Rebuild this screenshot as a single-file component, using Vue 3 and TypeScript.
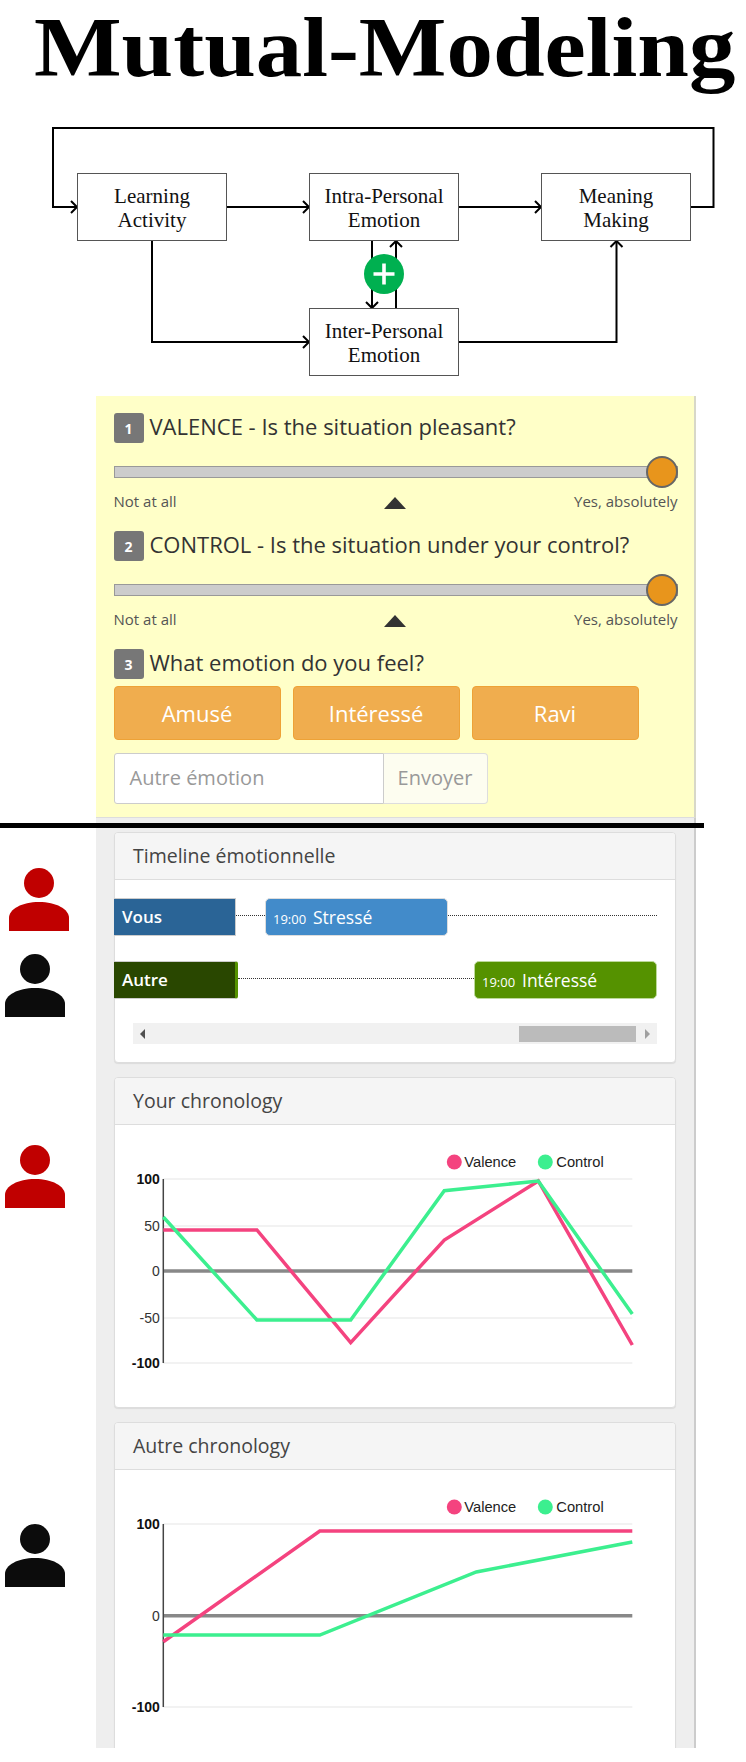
<script setup lang="ts">
interface Box { x: number; y: number; l1: string; l2: string }
const boxes: Box[] = [
  { x: 77, y: 53, l1: 'Learning', l2: 'Activity' },
  { x: 309, y: 53, l1: 'Intra-Personal', l2: 'Emotion' },
  { x: 541, y: 53, l1: 'Meaning', l2: 'Making' },
  { x: 309, y: 188, l1: 'Inter-Personal', l2: 'Emotion' }
]
const arrows: string[] = [
  'M690 87H713.5V8H53V87H77',
  'M226 87H309',
  'M459 87H541',
  'M152 120V222H309',
  'M459 222H616.5V121',
  'M372 120V188',
  'M396 188V121'
]
const heads: string[] = [
  'M71 81L77 87L71 93', 'M303 81L309 87L303 93', 'M535 81L541 87L535 93',
  'M303 216L309 222L303 228', 'M610.5 127L616.5 121L622.5 127',
  'M366 182L372 188L378 182', 'M390 127L396 121L402 127'
]
interface Question { n: number; text: string }
const sliders: Question[] = [
  { n: 1, text: 'VALENCE - Is the situation pleasant?' },
  { n: 2, text: 'CONTROL - Is the situation under your control?' }
]
const emotions = ['Amusé', 'Intéressé', 'Ravi']
interface Person { color: string; cls: string }
const people: Person[] = [
  { color: '#c00000', cls: 'p1' },
  { color: '#0c0c0c', cls: 'p2' },
  { color: '#c00000', cls: 'p3' },
  { color: '#0c0c0c', cls: 'p4' }
]
interface Tick { label: string; y: number; zero?: boolean; major?: boolean }
interface Chart {
  title: string; cls: string; ticks: Tick[]; valence: string; control: string
}
const charts: Chart[] = [
  {
    title: 'Your chronology', cls: 'c1',
    ticks: [
      { label: '100', y: 49, major: true }, { label: '50', y: 96 }, { label: '0', y: 141, zero: true },
      { label: '-50', y: 188 }, { label: '-100', y: 233, major: true }
    ],
    valence: '49,100 142.6,100 236.4,212.7 330,110 424,51 518,215',
    control: '49,87 142.6,190 236.4,190 330,60.7 424,51 518,184'
  },
  {
    title: 'Autre chronology', cls: 'c2',
    ticks: [
      { label: '100', y: 49, major: true }, { label: '0', y: 140.7, zero: true }, { label: '-100', y: 232, major: true }
    ],
    valence: '49,166.7 205.5,56 518,56',
    control: '49,160 205.5,160 362,97 518,67'
  }
]
</script>

<template>
  <div class="page">
    <div class="title-wrap"><h1 class="title">Mutual-Modeling</h1></div>

    <svg class="diagram" width="746" height="260" viewBox="0 0 746 260">
      <g fill="none" stroke="#000" stroke-width="2">
        <path v-for="d in arrows" :key="d" :d="d" />
        <path v-for="d in heads" :key="d" :d="d" />
      </g>
      <g v-for="b in boxes" :key="b.l1">
        <rect :x="b.x + 0.5" :y="b.y + 0.5" width="149" height="67" fill="#fff" stroke="#555" />
        <text class="node" :x="b.x + 75" :y="b.y + 30">{{ b.l1 }}</text>
        <text class="node" :x="b.x + 75" :y="b.y + 54">{{ b.l2 }}</text>
      </g>
      <circle cx="384" cy="154" r="20" fill="#00b050" />
      <path d="M384 143.5V164.500M373.500 154H394.500" stroke="#fff" stroke-width="3.600" />
    </svg>

    <section class="form">
      <div v-for="s in sliders" :key="s.n" class="q-slider">
        <div class="q-head">
          <span class="badge">{{ s.n }}</span>
          <span class="q-text">{{ s.text }}</span>
        </div>
        <div class="track"><span class="thumb"></span></div>
        <div class="scale">
          <span>Not at all</span>
          <span class="tri"></span>
          <span class="scale-end">Yes, absolutely</span>
        </div>
      </div>
      <div class="q-head">
        <span class="badge">3</span>
        <span class="q-text">What emotion do you feel?</span>
      </div>
      <div class="emotions">
        <button v-for="e in emotions" :key="e" class="emo" type="button">{{ e }}</button>
      </div>
      <div class="other">
        <div class="field">Autre émotion</div>
        <div class="send">Envoyer</div>
      </div>
    </section>

    <div class="lower">
      <div class="rule"></div>
      <aside class="rail">
        <svg v-for="p in people" :key="p.cls" :class="['person', p.cls]" width="60" height="63" viewBox="0 0 60 63">
          <ellipse cx="30" cy="15" rx="15" ry="15" :fill="p.color" />
          <path d="M0 63V50C0 41 13 34 30 34C47 34 60 41 60 50V63Z" :fill="p.color" />
        </svg>
      </aside>
      <div class="panel">
        <article class="card tl-card">
          <header class="card-head">Timeline émotionnelle</header>
          <div class="tl">
            <div class="tl-row r1">
              <div class="tl-name vous">Vous</div>
              <div class="dots d1"></div>
              <div class="tl-event blue"><small>19:00</small><span>Stressé</span></div>
              <div class="dots d2"></div>
            </div>
            <div class="tl-row r2">
              <div class="tl-name autre">Autre</div>
              <div class="dots d3"></div>
              <div class="tl-event green"><small>19:00</small><span>Intéressé</span></div>
            </div>
            <div class="scrollbar">
              <svg width="8" height="10" viewBox="0 0 8 10"><path d="M6 0V10L1 5Z" fill="#505050" /></svg>
              <div class="sb-track"><div class="sb-thumb"></div></div>
              <svg width="8" height="10" viewBox="0 0 8 10"><path d="M2 0V10L7 5Z" fill="#a0a0a0" /></svg>
            </div>
          </div>
        </article>

        <article v-for="c in charts" :key="c.cls" :class="['card', c.cls]">
          <header class="card-head">{{ c.title }}</header>
          <svg class="chart" width="559" height="285" viewBox="0 0 559 285">
            <g transform="translate(-0.7 5)">
              <g v-for="t in c.ticks" :key="t.label">
                <line x1="49" :y1="t.y" x2="518" :y2="t.y" :stroke="t.zero ? '#888' : '#eee'" :stroke-width="t.zero ? 3.5 : 1.5" />
                <text :class="['tick', { major: t.major }]" x="45.500" :y="t.y + 5">{{ t.label }}</text>
              </g>
              <line x1="49" :y1="c.ticks[0].y" x2="49" :y2="c.ticks[c.ticks.length - 1].y" stroke="#444" stroke-width="1.500" />
              <polyline :points="c.valence" fill="none" stroke="#f4437f" stroke-width="3.500" />
              <polyline :points="c.control" fill="none" stroke="#3cef8f" stroke-width="3.500" />
              <ellipse cx="340" cy="32" rx="7.500" ry="7.500" fill="#f4437f" />
              <text class="legend" x="350" y="37">Valence</text>
              <ellipse cx="431" cy="32" rx="7.500" ry="7.500" fill="#3cef8f" />
              <text class="legend" x="442" y="37">Control</text>
            </g>
          </svg>
        </article>
      </div>
    </div>
  </div>
</template>

<style>
html, body { margin: 0; background: #fff; }
</style>

<style scoped>
.page {
  width: 746px;
  height: 1762px;
  overflow: hidden;
  background: #fff;
  font-family: "Open Sans", sans-serif;
  color: #333;
}
.title-wrap { height: 120px; padding-left: 34px; }
.title {
  margin: 0;
  font-family: "Liberation Serif", serif;
  font-weight: 700;
  font-size: 84px;
  line-height: 96px;
  color: #000;
  white-space: nowrap;
  transform: scaleX(1.105);
  transform-origin: left top;
}
.diagram { display: block; }
.node {
  font-family: "Liberation Serif", serif;
  font-size: 21px;
  text-anchor: middle;
  fill: #111;
}
.form {
  box-sizing: border-box;
  margin: 16px 0 0 96px;
  width: 600px;
  height: 422px;
  padding: 17px 19px 0 17.500px;
  background: #ffffc8;
  border-right: 2px solid #d8d8c8;
  border-bottom: 1px solid #ddd;
}
.q-slider { height: 118px; }
.q-head {
  display: flex;
  align-items: center;
  gap: 6px;
  height: 30px;
}
.badge {
  width: 30px;
  height: 30px;
  border-radius: 3px;
  background: #777;
  color: #fff;
  font-size: 14px;
  font-weight: 700;
  display: flex;
  align-items: center;
  justify-content: center;
}
.q-text { font-size: 22px; color: #333; margin-top: -5px; }
.track {
  position: relative;
  box-sizing: border-box;
  margin-top: 23px;
  height: 12px;
  background: #ccc;
  border: 1px solid #999;
  width: 564px;
}
.thumb {
  position: absolute;
  box-sizing: border-box;
  right: -1px;
  top: -11px;
  width: 32px;
  height: 32px;
  border-radius: 50%;
  background: #e8951c;
  border: 2px solid #666;
}
.scale {
  display: grid;
  grid-template-columns: 1fr auto 1fr;
  align-items: center;
  width: 564px;
  margin-top: 13px;
  height: 20px;
  font-size: 15px;
  color: #555;
}
.scale-end { text-align: right; }
.tri {
  width: 0;
  height: 0;
  border-left: 11px solid transparent;
  border-right: 11px solid transparent;
  border-bottom: 12px solid #333;
  margin: 4px 2px 0 0;
}
.emotions {
  display: flex;
  gap: 12px;
  margin-top: 7px;
}
.emo {
  box-sizing: border-box;
  width: 167px;
  height: 54px;
  background: #f0ad4e;
  border: 1px solid #eea236;
  border-radius: 4px;
  color: #fff;
  font-family: inherit;
  font-size: 22px;
  padding: 0;
}
.other {
  display: flex;
  margin-top: 13px;
  width: 374px;
  height: 51px;
}
.field {
  box-sizing: border-box;
  width: 270px;
  padding-left: 15px;
  background: #fff;
  border: 1px solid #ccc;
  border-radius: 3px 0 0 3px;
  color: #999;
  font-size: 20px;
  line-height: 47px;
}
.send {
  box-sizing: border-box;
  width: 104px;
  border: 1px solid #ddd;
  border-left: 0;
  border-radius: 0 4px 4px 0;
  background: #fdfdf0;
  color: #999;
  font-size: 20px;
  line-height: 47px;
  text-align: center;
}
.lower {
  position: relative;
  display: flex;
  height: 930px;
  align-items: flex-start;
}
.rule {
  position: absolute;
  left: 0;
  top: 5px;
  width: 704px;
  height: 5px;
  background: #000;
}
.rail {
  flex: 0 0 96px;
  display: flex;
  flex-direction: column;
  align-items: flex-start;
  padding-top: 50px;
}
.person { display: block; }
.p1 { margin-left: 8.500px; }
.p2 { margin: 23px 0 0 5px; }
.p3 { margin: 128px 0 0 5px; }
.p4 { margin: 316px 0 0 5px; }
.panel {
  box-sizing: border-box;
  width: 600px;
  height: 930px;
  overflow: hidden;
  padding: 14px 0 0 18px;
  background: #eee;
  border-right: 2px solid #ccc;
  display: flex;
  flex-direction: column;
  gap: 14px;
}
.card {
  box-sizing: border-box;
  width: 562px;
  flex: none;
  background: #fff;
  border: 1px solid #ddd;
  border-radius: 4px;
  box-shadow: 0 1px 1px rgba(0, 0, 0, .08);
}
.tl-card { height: 231px; }
.c1 { height: 331px; }
.c2 { height: 340px; }
.card-head {
  box-sizing: border-box;
  height: 47px;
  padding-left: 18px;
  background: #f5f5f5;
  border-bottom: 1px solid #ddd;
  border-radius: 3px 3px 0 0;
  font-size: 19.500px;
  line-height: 45px;
  color: #444;
}
.tl { padding-top: 18px; margin-left: -1px; }
.tl-row {
  display: flex;
  align-items: center;
  height: 38px;
}
.r2 { margin-top: 25px; }
.tl-name {
  box-sizing: border-box;
  height: 38px;
  padding-left: 8px;
  color: #fff;
  font-size: 17px;
  font-weight: 600;
  line-height: 36px;
  border: 1px solid #ccc;
  border-left: 0;
}
.vous { width: 122px; background: #2a6496; }
.autre { width: 124px; background: #294700; border-right: 3px solid #559200; border-radius: 0 3px 3px 0; }
.dots { height: 0; border-top: 1px dotted #333; margin-top: -4px; }
.d1 { width: 29px; }
.d2 { width: 209px; }
.d3 { width: 236px; }
.tl-event {
  box-sizing: border-box;
  width: 183px;
  height: 38px;
  border-radius: 5px;
  border: 1px solid #ddd;
  display: flex;
  align-items: center;
  padding-left: 7px;
  color: #fff;
  font-size: 17.500px;
}
.tl-event small { font-size: 13px; width: 40px; margin-top: 3px; }
.blue { background: #428bca; }
.green { background: #559200; border-color: #bcd99a; }
.scrollbar {
  display: flex;
  align-items: center;
  box-sizing: border-box;
  width: 524px;
  height: 21px;
  margin: 24px 0 0 19px;
  padding: 0 6px;
  background: #f1f1f1;
}
.sb-track { flex: 1; padding: 0 4px; display: flex; justify-content: flex-end; }
.sb-thumb { width: 117px; height: 16px; background: #bbb; margin-right: 3px; }
.chart { display: block; }
.tick {
  font-family: "Liberation Sans", sans-serif;
  font-size: 14px;
  text-anchor: end;
  fill: #333;
}
.tick.major { font-weight: 700; fill: #111; }
.legend {
  font-family: "Liberation Sans", sans-serif;
  font-size: 14.700px;
  fill: #222;
}
</style>
